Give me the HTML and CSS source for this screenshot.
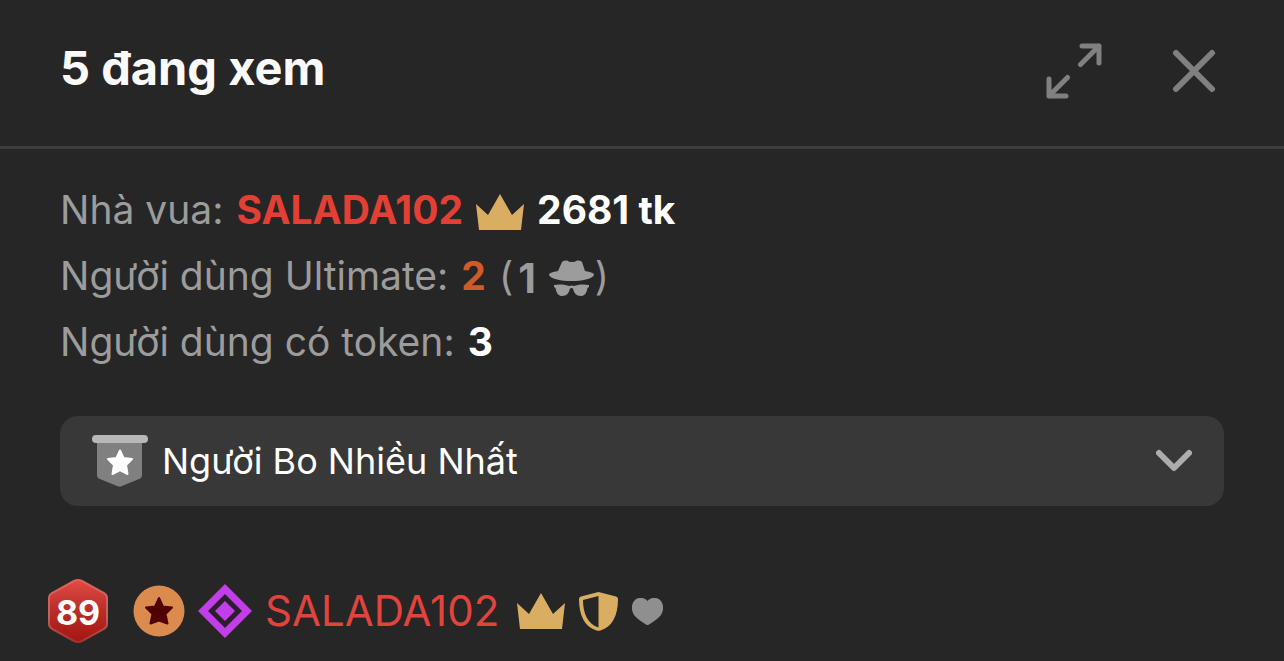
FILE: index.html
```html
<!DOCTYPE html>
<html lang="vi">
<head>
    <meta charset="UTF-8">
    <meta name="viewport" content="width=device-width, initial-scale=1.0">
    <title>Người xem</title>
    <link rel="stylesheet" href="styles.css">
</head>
<body>
    <!-- Shared icons -->
    <svg class="hidden">
        <symbol id="crown" viewBox="0 0 48 36">
            <path d="M0 10 12 21 24 0 36 21 48 10 45 36H3z" fill="#d9ae63"/>
        </symbol>
    </svg>

    <header class="header">
        <h1>5 đang xem</h1>
        <div class="actions">
            <button type="button" class="icon-btn" aria-label="Mở rộng">
                <svg width="56" height="56" viewBox="0 0 56 56" fill="none" stroke="#808080" stroke-width="5" stroke-linecap="round" stroke-linejoin="round">
                    <path d="M34.500 21.500 53 3M36 3H53V20"/>
                    <path d="M21.500 34.500 3 53M3 36V53H20"/>
                </svg>
            </button>
            <button type="button" class="icon-btn" aria-label="Đóng">
                <svg width="44" height="44" viewBox="0 0 44 44" fill="none" stroke="#808080" stroke-width="6" stroke-linecap="round">
                    <path d="M4 4 40 40M40 4 4 40"/>
                </svg>
            </button>
        </div>
    </header>

    <main class="content">
        <!-- Room stats -->
        <div class="stats">
            <div class="stat">
                <span>Nhà vua:</span>
                <a href="#" class="king">SALADA102</a>
                <svg class="crown"><use href="#crown"/></svg>
                <strong>2681 tk</strong>
            </div>
            <div class="stat">
                <span>Người dùng Ultimate:</span>
                <strong class="ultimate">2</strong>
                <span class="hidden-users">(<b>1</b>
                    <svg width="46" height="36" viewBox="0 0 46 36" fill="#9c9c9c">
                        <path d="M9 11 13 2Q14 0 18 0.500 20 2 23 2T28 0.500Q32 0 33 2L36 11C42 12 45 13 45 15 43 19 33 21 22.500 21S2 19 0 15C0 13 3 12 9 11z"/>
                        <path d="M5 25C10 24 17 24.500 20 26Q22.500 25 25 26C28 24.500 35 24 40 25V27L38.500 28C37.500 34 35 36 32 36 27 36 25 33 24 28.500Q22.500 27.500 21 28.500C20 33 18 36 13 36 10 36 7.500 34 6.500 28L5 27z"/>
                    </svg>)</span>
            </div>
            <div class="stat">
                <span>Người dùng có token:</span>
                <strong>3</strong>
            </div>
        </div>

        <!-- Sort drop-down -->
        <div class="sort">
            <svg width="56" height="52" viewBox="0 0 56 52">
                <path d="M5 4H50V40Q50 43 47 44L30 51Q27.500 52 25 51L8 44Q5 43 5 40z" fill="#808080"/>
                <rect width="56" height="8" rx="4" fill="#b8b8b8"/>
                <path d="M28 15.500 31.500 23 40 24 34 30 35.500 39 28 35 20.500 39 22 30 16 24 24.500 23z" fill="#fff" stroke="#fff" stroke-width="2" stroke-linejoin="round"/>
            </svg>
            <select aria-label="Sắp xếp">
                <option>Người Bo Nhiều Nhất</option>
            </select>
            <svg class="chevron" width="36" height="24" viewBox="0 0 36 24" fill="none" stroke="#adadad" stroke-width="6" stroke-linecap="round" stroke-linejoin="round">
                <path d="M3 4 18 19 33 4"/>
            </svg>
        </div>
    </main>

    <!-- Viewer list -->
    <ul class="users">
        <li class="user">
            <span class="level">
                <svg width="60" height="66" viewBox="0 0 60 66">
                    <defs>
                        <linearGradient id="level-bg" x1="0" y1="0" x2="0" y2="1">
                            <stop offset="0" stop-color="#e24b45"/>
                            <stop offset="0.500" stop-color="#b92c28"/>
                            <stop offset="1" stop-color="#a31713"/>
                        </linearGradient>
                        <linearGradient id="level-line" x1="0" y1="0" x2="0" y2="1">
                            <stop offset="0" stop-color="#e0605b"/>
                            <stop offset="0.600" stop-color="#bd6360"/>
                            <stop offset="1" stop-color="#a5302d"/>
                        </linearGradient>
                    </defs>
                    <path d="M26 3Q30 1 34 3L56 15Q59 17 59 20V46Q59 49 56 51L34 63Q30 65 26 63L4 51Q1 49 1 46V20Q1 17 4 15z" fill="url(#level-bg)" stroke="url(#level-line)" stroke-width="2"/>
                </svg>
                <b>89</b>
            </span>
            <svg class="league" width="52" height="52" viewBox="0 0 52 52">
                <circle cx="26" cy="26" r="25.500" fill="#dc8b4e"/>
                <path d="M26 13 30 21.500 39 22.500 32.500 29 34.500 38.500 26 35.500 17.500 38.500 19.500 29 13 22.500 22 21.500z" fill="#4f0000" stroke="#4f0000" stroke-width="2" stroke-linejoin="round"/>
            </svg>
            <svg class="ultimate-badge" width="54" height="54" viewBox="0 0 54 54">
                <path d="M27 0 54 27 27 54 0 27z" fill="#c23ee8"/>
                <path d="M27 10 44 27 27 44 10 27z" fill="#2b1f2f"/>
                <path d="M27 17 37 27 27 37 17 27z" fill="#c23ee8"/>
            </svg>
            <a href="#" class="name">SALADA102</a>
            <svg class="crown"><use href="#crown"/></svg>
            <svg class="shield" width="39" height="39" viewBox="0 0 39 39">
                <path fill-rule="evenodd" d="M17.500 0.500Q19.500-0.500 21.500 0.500L37 4.500Q39 5 39 7C39 24 33 35 21.500 38.500Q19.500 39 17.500 38.500C6 35 0 24 0 7Q0 5 2 4.500zM19.500 4 4 8C4 22 9 32 19.500 35.500z" fill="#d9ae63"/>
            </svg>
            <svg class="heart" width="31" height="27" viewBox="0 0 31 27">
                <path d="M15.500 3C19-1 25-1 28 2 32 6 32 12 29 17 26 21 21 24 17 26.500Q15.500 27.500 14 26.500C10 24 5 21 2 17-1 12-1 6 3 2 6-1 12-1 15.500 3z" fill="#8f8f8f"/>
            </svg>
        </li>
    </ul>
</body>
</html>
```
FILE: styles.css
```css
* {
    box-sizing: border-box;
}

body {
    margin: 0;
    background: #262626;
    color: #fff;
    font-family: Inter, sans-serif;
}

a {
    text-decoration: none;
}

svg {
    display: block;
    flex-shrink: 0;
}

.hidden {
    display: none;
}

.crown {
    width: 48px;
    height: 36px;
}

/* Header */
.header {
    display: flex;
    justify-content: space-between;
    align-items: flex-start;
    padding: 43px 68px 47px 60px;
    border-bottom: 3px solid #3d3d3d;
}

h1 {
    margin: 0;
    color: #fafafa;
    font-size: 47px;
    line-height: 50px;
    font-weight: 700;
}

.actions {
    display: flex;
    align-items: center;
    gap: 70px;
}

.icon-btn {
    padding: 0;
    border: none;
    background: none;
    cursor: pointer;
}

/* Stats */
.content {
    padding: 28px 60px 0;
}

.stat {
    display: flex;
    align-items: center;
    gap: 13px;
    color: #9c9c9c;
    font-size: 39px;
    line-height: 66px;
}

.stat svg {
    margin-top: 4px;
}

.stat strong {
    color: #fff;
    font-weight: 700;
}

.stat .king {
    color: #e33f35;
    font-weight: 700;
}

.stat .ultimate {
    color: #d15a2a;
}

.hidden-users {
    display: flex;
    align-items: center;
}

.hidden-users b {
    margin: 4px 13px 0 5px;
    font-size: 41px;
    line-height: 48px;
}

/* Sort */
.sort {
    display: flex;
    align-items: center;
    gap: 14px;
    height: 90px;
    margin-top: 41px;
    padding: 0 32px;
    border-radius: 18px;
    background: #383838;
}

.sort select {
    flex: 1;
    min-width: 0;
    padding: 0;
    border: none;
    outline: none;
    appearance: none;
    background: transparent;
    color: #fff;
    font-family: inherit;
    font-size: 36px;
    line-height: 48px;
}

/* Users */
.users {
    margin: 0;
    padding: 72px 48px 0;
    list-style: none;
}

.user {
    display: flex;
    align-items: center;
}

.level {
    display: grid;
    place-items: center;
    margin-right: 25px;
}

.level > * {
    grid-area: 1 / 1;
}

.level b {
    padding-top: 4px;
    font-size: 34px;
    line-height: 40px;
}

.league {
    margin-right: 13px;
}

.ultimate-badge {
    margin-right: 13px;
}

.name {
    margin-right: 18px;
    color: #e0443c;
    font-size: 42px;
    line-height: 60px;
}

.shield {
    margin: 0 14px;
}
```
